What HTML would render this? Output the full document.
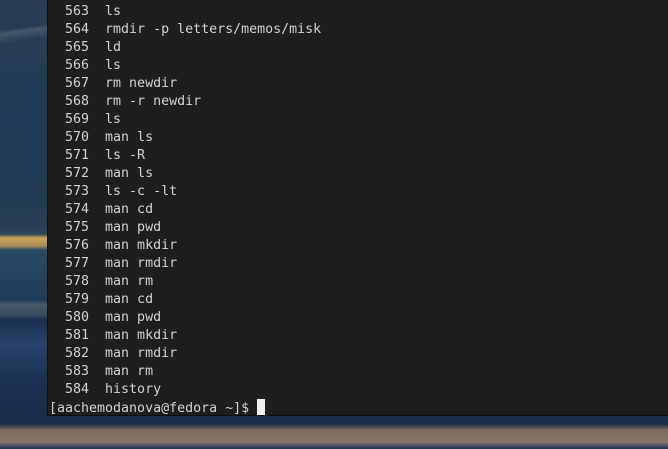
<!DOCTYPE html>
<html><head><style>
html,body{margin:0;padding:0;width:668px;height:449px;overflow:hidden}
body{position:relative;background:#1d3247}
.bg{position:absolute;inset:0;background:
linear-gradient(172deg,transparent 0,transparent 30px,rgba(130,140,150,.35) 34px,transparent 44px) ,
linear-gradient(180deg,#2a3d52 0,#203a55 120px,#253c52 220px,#2c4257 234px,#c9a45a 238px,#a48a5a 246px,#2b4a63 250px,#1f3a55 300px,#4a5b6a 305px,#34495c 315px,#1b2f4f 320px,#28406a 345px,#1b3152 380px,#1a2b45 424px,#7d6c62 430px,#8a756a 442px,#24395a 448px)}
.term{position:absolute;left:47px;top:0;width:621px;height:416px;background:#1e1e1e;border-left:1px solid #111;border-bottom:1px solid #0e0e0e;box-sizing:border-box}
pre{margin:0;position:absolute;left:1px;top:3px;font-family:"DejaVu Sans Mono","Liberation Mono",monospace;font-size:13.3px;line-height:18px;color:#d2d2d2}
.cur{display:inline-block;width:8px;height:16px;background:#f0f0f0;vertical-align:-3px}
</style></head><body>
<div class="bg"></div>
<div class="term"><pre>  563  ls
  564  rmdir -p letters/memos/misk
  565  ld
  566  ls
  567  rm newdir
  568  rm -r newdir
  569  ls
  570  man ls
  571  ls -R
  572  man ls
  573  ls -c -lt
  574  man cd
  575  man pwd
  576  man mkdir
  577  man rmdir
  578  man rm
  579  man cd
  580  man pwd
  581  man mkdir
  582  man rmdir
  583  man rm
  584  history
[aachemodanova@fedora ~]$ <span class="cur"></span></pre></div>
</body></html>
